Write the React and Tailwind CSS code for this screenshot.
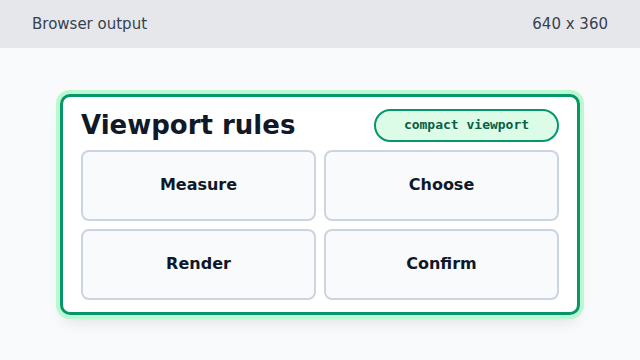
export default function App() {
  const items = ["Measure", "Choose", "Render", "Confirm"];
  return (
    <div className="w-[640px] h-[360px] flex flex-col bg-[#f9fafb] overflow-hidden" style={{ fontFamily: '"DejaVu Sans", sans-serif' }}>
      <div className="h-[48px] shrink-0 bg-[#e5e7eb] flex items-center justify-between px-8 text-[15px] text-[#374151]">
        <span>Browser output</span>
        <span>640 x 360</span>
      </div>
      <div className="flex-1 flex items-center justify-center">
        <div className="w-[520px] bg-white border-[3px] border-[#059669] rounded-[10px] ring-4 ring-[#bbf7d0] shadow-lg px-[18px] py-3 flex flex-col gap-2">
          <div className="flex items-center justify-between">
            <h1 className="text-[26px] font-bold text-[#111827] leading-none">Viewport rules</h1>
            <span className="h-[33px] w-[185px] flex items-center justify-center rounded-full border-2 border-[#059669] bg-[#dcfce7] text-[#065f46] text-[13px] font-bold" style={{ fontFamily: '"DejaVu Sans Mono", monospace' }}>compact viewport</span>
          </div>
          <div className="grid grid-cols-2 gap-2">
            {items.map((t) => (
              <div key={t} className="h-[71px] flex items-center justify-center rounded-lg border-2 border-[#cbd5e1] bg-[#f8fafc] text-[16px] font-bold text-[#0f172a]">
                {t}
              </div>
            ))}
          </div>
        </div>
      </div>
    </div>
  );
}
